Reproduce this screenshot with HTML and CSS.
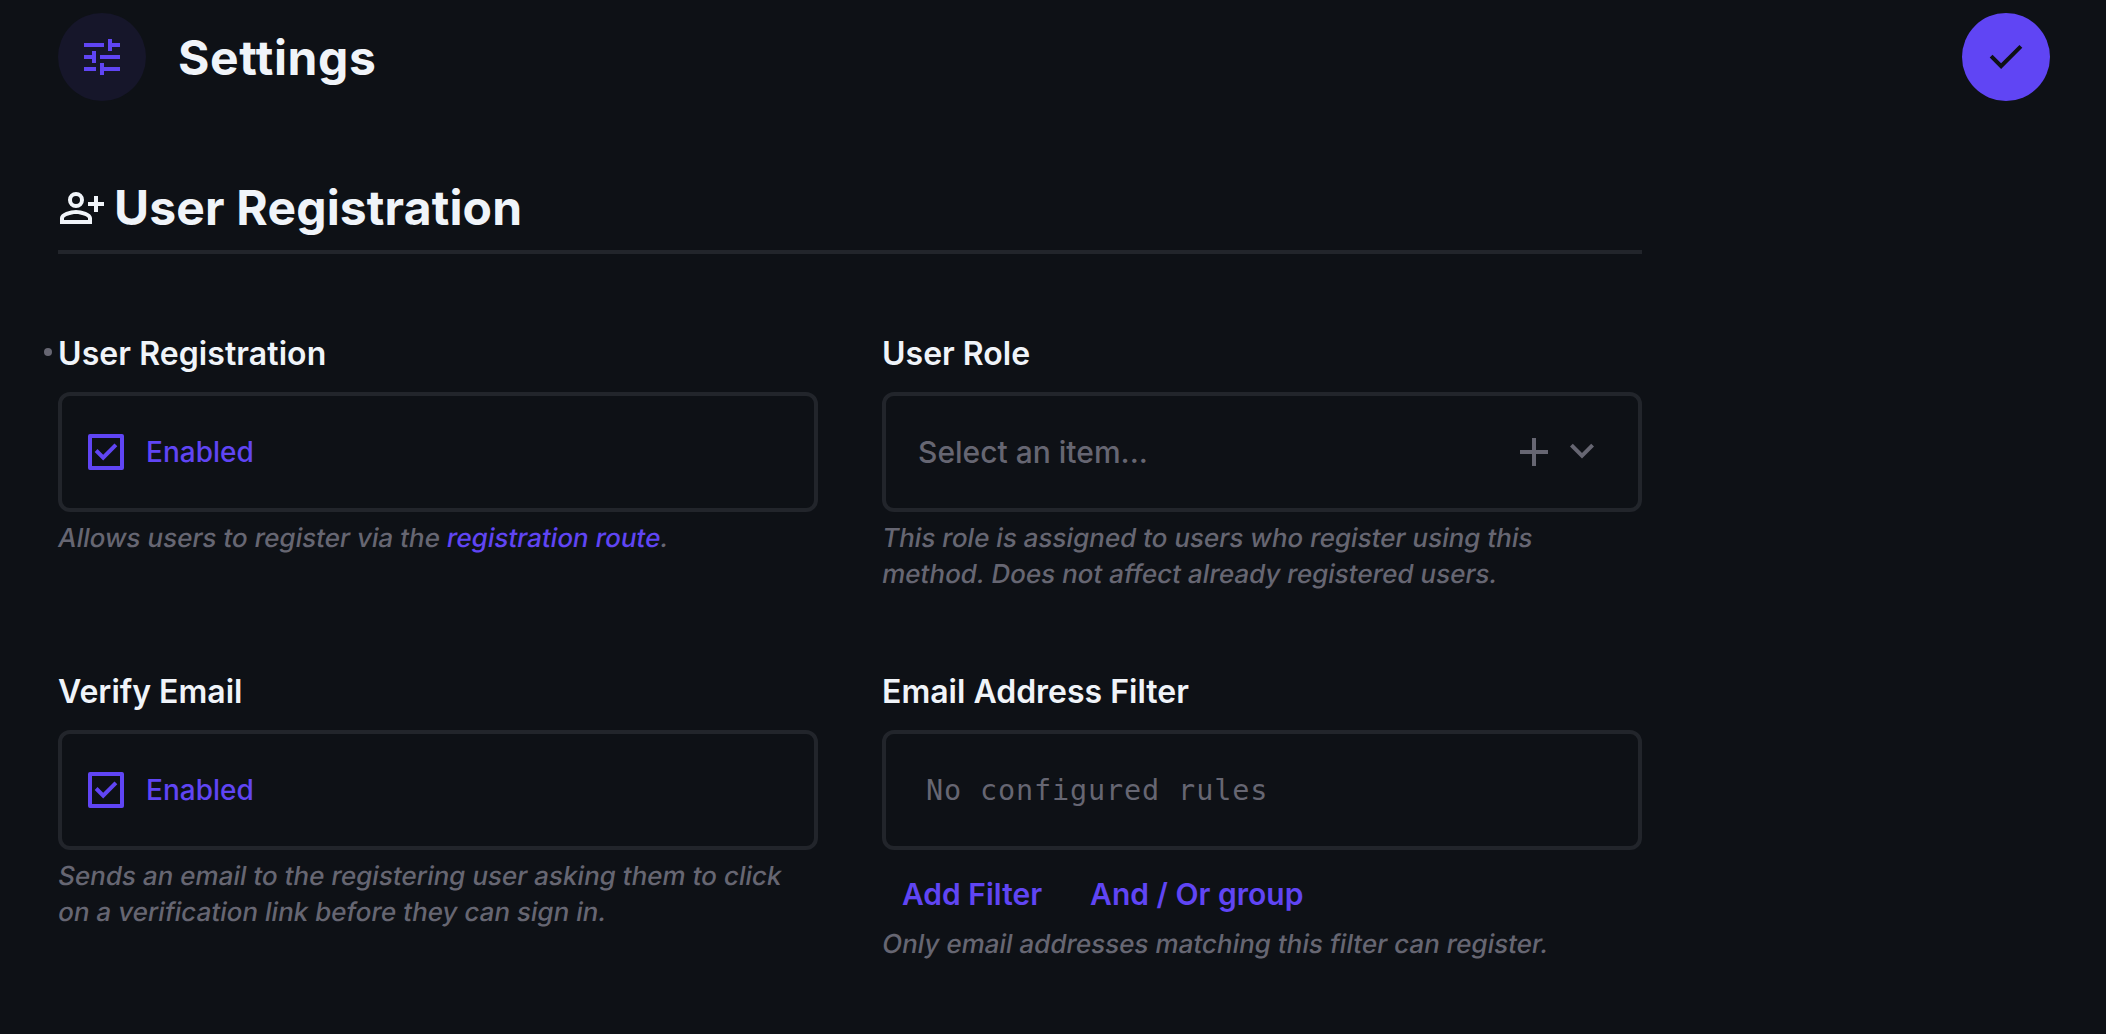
FILE: index.html
```html
<!DOCTYPE html>
<html lang="en">
<head>
<meta charset="utf-8">
<title>Settings</title>
<link rel="stylesheet" href="styles.css">
</head>
<body>
<header class="header">
  <div class="badge"><svg class="icon" viewBox="0 0 24 24"><path d="M3 17v2h6v-2H3zM3 5v2h10V5H3zm10 16v-2h8v-2h-8v-2h-2v6h2zM7 9v2H3v2h4v2h2V9H7zm14 4v-2H11v2h10zm-6-4h2V7h4V5h-4V3h-2v6z"/></svg></div>
  <h1 class="title">Settings</h1>
  <button class="save" aria-label="Save"><svg class="icon" viewBox="0 0 24 24"><path d="M9.55 18 3.85 12.3l1.425-1.425L9.55 15.15l9.175-9.175L20.15 7.4z"/></svg></button>
</header>
<main class="form">
  <h2 class="section">
    <svg class="icon" viewBox="0 0 24 24"><path fill-rule="evenodd" d="M9 4a4 4 0 1 1 0 8 4 4 0 0 1 0-8zm0 2a2 2 0 1 0 0 4 2 2 0 0 0 0-4zM9 13c-2.67 0-8 1.34-8 4v3h16v-3c0-2.66-5.33-4-8-4zM3 18v-1c.2-.71 3.3-2 6-2s5.8 1.29 6 2v1H3zM18 6h2v3h3v2h-3v3h-2v-3h-3V9h3z"/></svg>
    <span class="section-text">User Registration</span>
  </h2>
  <div class="grid">
    <section class="field">
      <h3 class="label edited">User Registration</h3>
      <div class="box check">
        <svg class="icon" viewBox="0 0 24 24"><path fill-rule="evenodd" d="M4 3h16a1 1 0 0 1 1 1v16a1 1 0 0 1-1 1H4a1 1 0 0 1-1-1V4a1 1 0 0 1 1-1zM5 5v14h14V5z"/><path d="m10.6 16.2 7.05-7.05-1.4-1.4-5.65 5.65-2.85-2.85-1.4 1.4z"/></svg>
        <span class="check-text">Enabled</span>
      </div>
      <p class="note"><span class="line">Allows users to register via the <a class="link">registration route</a>.</span></p>
    </section>
    <section class="field">
      <h3 class="label">User Role</h3>
      <div class="box select">
        <span class="placeholder">Select an item...</span>
        <svg class="icon" viewBox="0 0 24 24"><path d="M11 5h2v6h6v2h-6v6h-2v-6H5v-2h6z"/></svg>
        <svg class="icon" viewBox="0 0 24 24"><path d="m12 15.3-6-6L7.4 7.9l4.6 4.6 4.6-4.6L18 9.3z"/></svg>
      </div>
      <p class="note"><span class="line">This role is assigned to users who register using this</span> <span class="line">method. Does not affect already registered users.</span></p>
    </section>
    <section class="field">
      <h3 class="label">Verify Email</h3>
      <div class="box check">
        <svg class="icon" viewBox="0 0 24 24"><path fill-rule="evenodd" d="M4 3h16a1 1 0 0 1 1 1v16a1 1 0 0 1-1 1H4a1 1 0 0 1-1-1V4a1 1 0 0 1 1-1zM5 5v14h14V5z"/><path d="m10.6 16.2 7.05-7.05-1.4-1.4-5.65 5.65-2.85-2.85-1.4 1.4z"/></svg>
        <span class="check-text">Enabled</span>
      </div>
      <p class="note"><span class="line">Sends an email to the registering user asking them to click</span> <span class="line">on a verification link before they can sign in.</span></p>
    </section>
    <section class="field">
      <h3 class="label">Email Address Filter</h3>
      <div class="box rules"><span class="mono">No configured rules</span></div>
      <div class="actions">
        <button class="action">Add Filter</button>
        <button class="action">And / Or group</button>
      </div>
      <p class="note"><span class="line">Only email addresses matching this filter can register.</span></p>
    </section>
  </div>
</main>
</body>
</html>
```
FILE: styles.css
```css
* { box-sizing: border-box; }

body {
  margin: 0;
  min-height: 1034px;
  background: #0e1116;
  color: #f0f4f9;
  font-family: Inter, "Liberation Sans", sans-serif;
  font-weight: 500;
}

h1, h2, h3, p { margin: 0; }

button {
  border: 0;
  padding: 0;
  background: none;
  font-family: inherit;
}

.icon {
  display: block;
  flex: none;
  width: 48px;
  height: 48px;
  fill: currentColor;
}

.header {
  display: flex;
  align-items: center;
  padding: 13px 56px 0 58px;
}

.badge, .save {
  display: flex;
  align-items: center;
  justify-content: center;
  width: 88px;
  height: 88px;
  border-radius: 50%;
}

.badge { background: #16162a; color: #6045f4; }
.save { margin-left: auto; background: #6045f4; color: #0e1116; }

.title {
  margin-left: 32px;
  padding-top: 2px;
  font-size: 48px;
  font-weight: 700;
  letter-spacing: 0.6px;
  line-height: 60px;
}

.form { width: 1584px; margin: 77px 0 0 58px; }

.section {
  display: flex;
  align-items: center;
  gap: 8px;
  height: 76px;
  padding-bottom: 12px;
  border-bottom: 4px solid #22252b;
  font-size: 48px;
  font-weight: 700;
  letter-spacing: 0.16px;
  line-height: 60px;
}

.grid {
  display: grid;
  grid-template-columns: 760px 760px;
  gap: 80px 64px;
  margin-top: 80px;
}

.label {
  position: relative;
  padding-top: 1px;
  font-size: 32px;
  font-weight: 600;
  line-height: 38px;
}

.edited { letter-spacing: 0.08px; }

.edited::before {
  content: "";
  position: absolute;
  left: -14px;
  top: 14px;
  width: 8px;
  height: 8px;
  border-radius: 50%;
  background: #666672;
}

.box {
  display: flex;
  align-items: center;
  height: 120px;
  margin-top: 19px;
  border: 4px solid #22252b;
  border-radius: 12px;
  font-size: 30px;
}

.check { padding-left: 20px; gap: 16px; color: #6045f4; font-size: 28px; }
.select { padding: 0 32px; color: #666672; }
.placeholder { flex: 1; }
.rules { padding-left: 40px; color: #666672; }

.mono {
  font-family: "DejaVu Sans Mono", monospace;
  font-size: 28.5px;
  letter-spacing: 0.85px;
}

.note {
  margin: 8px 0 0 -1px;
  color: #666672;
  font-size: 26px;
  line-height: 36px;
}

/* Slants the upright letterforms around each line's baseline. */
.line {
  display: block;
  transform: skewX(-9.4deg);
  transform-origin: 0 27px;
}

.link { color: #6045f4; }

.actions {
  display: flex;
  gap: 48px;
  height: 48px;
  margin-top: 20px;
  padding-left: 20px;
}

.action {
  color: #6045f4;
  font-size: 30px;
  font-weight: 600;
}
```
